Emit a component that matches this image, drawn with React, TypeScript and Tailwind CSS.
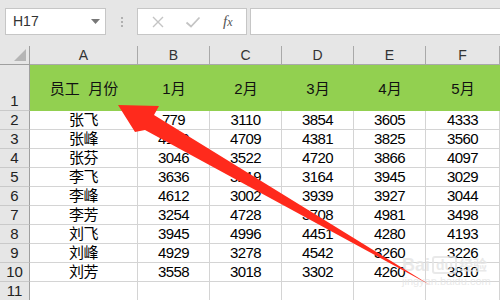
const cols = ['A', 'B', 'C', 'D', 'E', 'F']

const rows = [
  ['张飞', '779', '3110', '3854', '3605', '4333'],
  ['张峰', '4109', '4709', '4381', '3825', '3560'],
  ['张芬', '3046', '3522', '4720', '3866', '4097'],
  ['李飞', '3636', '3219', '3164', '3945', '3029'],
  ['李峰', '4612', '3002', '3939', '3927', '3044'],
  ['李芳', '3254', '4728', '3708', '4981', '3498'],
  ['刘飞', '3945', '4996', '4451', '4280', '4193'],
  ['刘峰', '4929', '3278', '4542', '3260', '3226'],
  ['刘芳', '3558', '3018', '3302', '4260', '3810'],
]

const months = ['1月', '2月', '3月', '4月', '5月']

const font = { fontFamily: '"Liberation Sans", "Noto Sans CJK SC", sans-serif' }

function RowHead({ n, tall }: { n: number; tall?: boolean }) {
  return (
    <div
      className={`flex items-end justify-center border-r border-b border-r-[#9f9f9f] border-b-[#c9c9c9] bg-[#e6e6e6] text-[15px] leading-none text-[#222] pb-[2px] ${
        tall ? 'h-[46px]' : 'h-[19px]'
      }`}
    >
      {n}
    </div>
  )
}

export default function App() {
  return (
    <div className="relative w-[500px] h-[300px] overflow-hidden bg-[#e6e6e6] select-none" style={font}>
      {/* formula bar */}
      <div className="flex items-center h-[46px] pt-[8px] pb-[11px] pl-[5px]">
        <div className="flex items-center justify-between w-[101px] h-[27px] bg-white border border-[#c6c6c6] pl-[7px] pr-[5px]">
          <span className="text-[14px] text-[#333]">H17</span>
          <svg width="9" height="5" viewBox="0 0 9 5">
            <path d="M0 0H9L4.5 5Z" fill="#777" />
          </svg>
        </div>
        <div className="flex flex-col gap-[2px] w-[31px] items-center">
          <span className="w-[2px] h-[2px] bg-[#b0b0b0]" />
          <span className="w-[2px] h-[2px] bg-[#b0b0b0]" />
          <span className="w-[2px] h-[2px] bg-[#b0b0b0]" />
        </div>
        <div className="flex items-center w-[110px] h-[27px] bg-white border border-[#c6c6c6] pl-[13px]">
          <svg width="14" height="14" viewBox="0 0 14 14">
            <path d="M2 2L12 12M12 2L2 12" stroke="#c4c4c4" strokeWidth="1.4" />
          </svg>
          <svg width="16" height="14" viewBox="0 0 16 14" className="ml-[20px]">
            <path d="M1.5 7.5L6 11.5L14.5 2.5" stroke="#c4c4c4" strokeWidth="1.8" fill="none" />
          </svg>
          <span
            className="ml-[22px] text-[15px] italic text-[#555]"
            style={{ fontFamily: '"Liberation Serif", serif' }}
          >
            f<span className="text-[12px]">x</span>
          </span>
        </div>
        <div className="ml-[3px] flex-1 h-[27px] bg-white border border-[#c6c6c6] border-r-0" />
      </div>

      {/* sheet */}
      <div className="grid grid-cols-[30px_108px_72px_72px_72px_72px_74px_1fr]">
        {/* column headers */}
        <div className="relative h-[19px] border-r border-b border-[#9f9f9f]">
          <svg width="12" height="12" viewBox="0 0 12 12" className="absolute right-[3px] bottom-[3px]">
            <path d="M12 0V12H0Z" fill="#b5b5b5" />
          </svg>
        </div>
        {cols.map((c) => (
          <div
            key={c}
            className="flex items-center justify-center h-[19px] border-r border-b border-[#a9a9a9] text-[14px] text-[#333] pt-[1px]"
          >
            {c}
          </div>
        ))}
        <div className="h-[19px] border-b border-[#a9a9a9]" />

        {/* row 1 */}
        <RowHead n={1} tall />
        <div className="col-span-6 grid grid-cols-[108px_72px_72px_72px_72px_74px] h-[46px] bg-[#92d050] border-b border-[#92d050]">
          <div className="flex items-center justify-center text-[15px] text-[#111] pt-[3px] whitespace-pre">员工  月份</div>
          {months.map((m) => (
            <div key={m} className="flex items-center justify-center text-[15px] text-[#111] pt-[3px]">
              {m}
            </div>
          ))}
        </div>
        <div className="h-[46px] bg-white border-b border-[#d4d4d4]" />

        {rows.map((r, i) => (
          <div key={i} className="contents">
            <RowHead n={i + 2} />
            {r.map((v, j) => (
              <div
                key={j}
                className="flex items-end justify-center h-[19px] bg-white border-r border-b border-[#d4d4d4] text-[15px] leading-none text-black pb-[2px] tracking-[-0.6px]"
              >
                {v}
              </div>
            ))}
            <div className="h-[19px] bg-white border-b border-[#d4d4d4]" />
          </div>
        ))}

        <RowHead n={11} />
        {cols.map((c) => (
          <div key={c} className="h-[19px] bg-white border-r border-b border-[#d4d4d4]" />
        ))}
        <div className="h-[19px] bg-white" />
      </div>

      {/* watermark */}
      <div className="absolute left-[402px] top-[256px] flex flex-col items-start leading-none text-[#e4e4e4]/80 pointer-events-none">
        <div className="flex items-center gap-[2px] text-[18px] font-bold">
          <span>Bai</span>
          <span className="px-[2px] rounded-[3px] border-2 border-[#e4e4e4]/80 text-[14px]">du</span>
          <span className="text-[14px]">经验</span>
        </div>
        <span className="text-[11px] mt-[2px]">jingyan.baidu.com</span>
      </div>

      {/* arrow */}
      <svg className="absolute left-0 top-0 pointer-events-none" width="500" height="300" viewBox="0 0 500 300">
        <polygon points="118,105 159,106 154,115 430,285 145,130 135,132" fill="#ff2a1c" />
      </svg>
    </div>
  )
}
